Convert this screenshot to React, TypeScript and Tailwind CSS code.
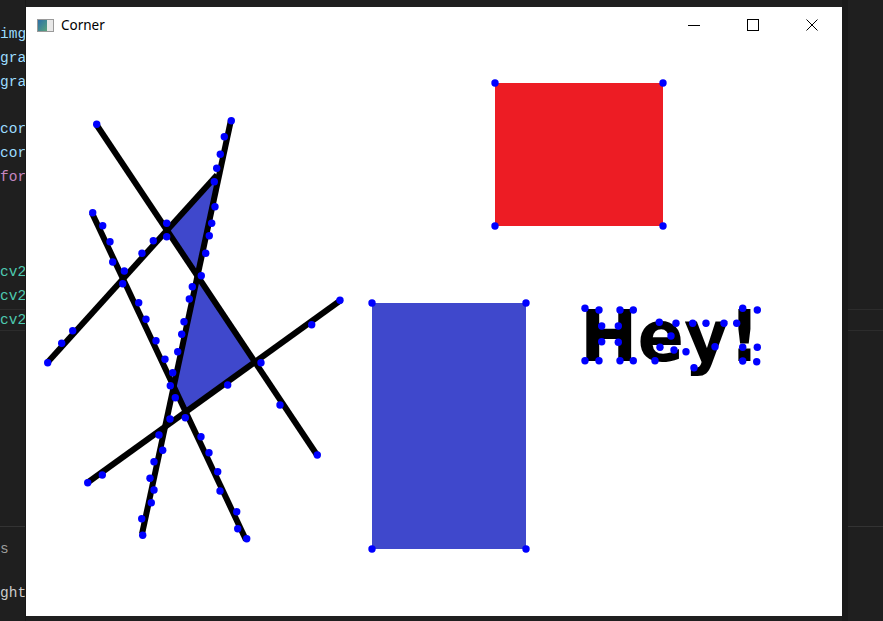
const lines: [number, number, number, number][] = [
  [96, 124, 317, 455],
  [231, 120, 142, 534],
  [47, 363, 217, 175],
  [92, 213, 246, 540],
  [87, 483, 341, 300],
];

const dots: [number, number][] = [
  [96.7, 124.3], [231.3, 120.7], [224.3, 136.7], [220.3, 154.3], [216.7, 168.3], [214.3, 181.7],
  [215, 206.7], [211.7, 223.3], [209.3, 235.7], [205.7, 253.3], [201.3, 275.7], [192.3, 286.7],
  [189.3, 299], [166.7, 223.3], [166.7, 236.7], [153.3, 240.7], [142, 253.3], [92.7, 212.7],
  [102.7, 225.7], [110, 241.7], [112.7, 262], [124.3, 271], [122.7, 283.7], [138.7, 302.7],
  [340, 300.3], [146, 319.3], [156, 340.7], [165, 359.3], [172.7, 372.7], [170.3, 385.7],
  [175.3, 397.7], [170, 419], [185.3, 417.7], [159, 435], [162.7, 450.3], [154, 461.7],
  [150, 478.3], [154, 490], [151.3, 502.7], [141.7, 518.7], [142.7, 535.3], [201, 436.7],
  [209, 452.7], [217.7, 471.7], [220, 491], [236.7, 511.7], [237.7, 528.7], [246.7, 538.7],
  [184, 321.7], [181.7, 334.3], [177.7, 351.7], [227.7, 385], [261, 362.7], [280, 405],
  [317.3, 455], [311.7, 324.7], [72.7, 330.7], [61.7, 343.3], [47.7, 362.7], [102.3, 475],
  [87.7, 482.7],
  // rectangles
  [495, 83], [663, 83], [495, 226], [663, 226],
  [372, 303], [526, 303], [372, 549], [526, 549],
  // Hey!
  [585, 308.3], [599, 310], [620, 310], [633.3, 310], [601.7, 326], [618.3, 326],
  [601.7, 341.7], [618.3, 342.3], [585, 360.7], [599, 360.7], [620, 360.7], [633.3, 360.7],
  [659.3, 322.3], [676, 323.3], [671, 336], [660, 347.3], [674, 350], [686, 351.7], [655, 360.7],
  [692.7, 323.3], [706, 323.3], [724, 323.3], [736.7, 323.3], [715, 346.7], [694, 367.7],
  [742.7, 308.3], [757.3, 310], [742.7, 347.3], [757.3, 347.3], [742.7, 361], [756.7, 361.7],
];

const codeRows: { text: string; color: string }[] = [
  { text: "img", color: "text-[#9cdcfe]" },
  { text: "gra", color: "text-[#9cdcfe]" },
  { text: "gra", color: "text-[#9cdcfe]" },
  { text: "", color: "" },
  { text: "cor", color: "text-[#9cdcfe]" },
  { text: "cor", color: "text-[#9cdcfe]" },
  { text: "for", color: "text-[#c586c0]" },
  { text: "", color: "" },
  { text: "", color: "" },
  { text: "", color: "" },
  { text: "cv2", color: "text-[#4ec9b0]" },
  { text: "cv2", color: "text-[#4ec9b0]" },
];

function Canvas() {
  return (
    <svg width="816" height="573" viewBox="26 43 816 573" className="block">
      <rect x="26" y="43" width="816" height="573" fill="#ffffff" />
      <rect x="495" y="83" width="168" height="143" fill="#ed1c24" />
      <rect x="372" y="303" width="154" height="246" fill="#3f48cc" />
      <polygon points="166.9,230 218,174 197.5,276" fill="#3f48cc" />
      <polygon points="197.5,276 255,362 186,412 174,386" fill="#3f48cc" />
      {lines.map(([x1, y1, x2, y2], i) => (
        <line key={i} x1={x1} y1={y1} x2={x2} y2={y2} stroke="#000" strokeWidth="6" />
      ))}
      <text
        x="580"
        y="361"
        textLength="180"
        lengthAdjust="spacingAndGlyphs"
        fontFamily="'DejaVu Sans', sans-serif"
        fontWeight="bold"
        fontSize="71"
        fill="#000"
      >
        Hey!
      </text>
      {dots.map(([x, y], i) => (
        <circle key={i} cx={x} cy={y} r="3.7" fill="#0000ff" />
      ))}
    </svg>
  );
}

export default function App() {
  return (
    <div className="flex h-[621px] w-[883px] overflow-hidden bg-[#1f1f1f] font-['Liberation_Mono',monospace]">
      <div className="flex w-[26px] shrink-0 flex-col overflow-hidden border-r border-[#181818]">
        <div className="h-[23px]" />
        {codeRows.map((r, i) => (
          <div key={i} className={`h-[23.8px] whitespace-nowrap text-[14.5px] leading-[23.8px] ${r.color}`}>
            {r.text}
          </div>
        ))}
        <div className="h-[22px] whitespace-nowrap border-y border-[#2c2c2c] text-[14.5px] leading-[20px] text-[#4ec9b0]">
          cv2
        </div>
        <div className="h-[195px]" />
        <div className="border-t border-[#333333]" />
        <div className="mt-[10px] h-[24px] text-[14.5px] leading-[24px] text-[#9d9d9d]">s</div>
        <div className="mt-[20px] whitespace-nowrap text-[14.5px] leading-[24px] text-[#cccccc]">ght</div>
      </div>
      <div className="mt-[7px] flex h-[609px] w-[816px] shrink-0 flex-col bg-white">
        <div className="flex h-[36px] items-center font-['Noto_Sans',sans-serif]">
          <div className="ml-[11px] flex h-[13px] w-[17px] border border-[#9a9a9a] bg-[#e8e8e8]">
            <div className="w-[9px] bg-gradient-to-br from-[#2f6ea6] to-[#5aa27a]" />
          </div>
          <span className="ml-[7px] text-[13.5px] text-black">Corner</span>
          <div className="ml-auto mr-[24px] flex items-center gap-[47px]">
            <div className="h-px w-[12px] bg-black" />
            <div className="h-[12px] w-[12px] border border-black" />
            <svg width="12" height="12" viewBox="0 0 12 12">
              <path d="M0.5 0.5 L11.5 11.5 M11.5 0.5 L0.5 11.5" stroke="#000" strokeWidth="1" />
            </svg>
          </div>
        </div>
        <Canvas />
      </div>
      <div className="flex flex-1 flex-col border-l-[6px] border-[#1a1a1a]">
        <div className="h-[309px]" />
        <div className="h-[22px] border-y border-[#2c2c2c]" />
        <div className="h-[195px]" />
        <div className="border-t border-[#333333]" />
      </div>
    </div>
  );
}
